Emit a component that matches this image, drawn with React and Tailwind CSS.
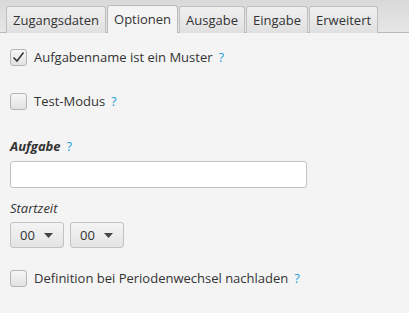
import { useState } from "react";

const tabs = ["Zugangsdaten", "Optionen", "Ausgabe", "Eingabe", "Erweitert"];

function Help() {
  return <span className="ml-[6px] text-[#1fa0d8]">?</span>;
}

function Check({ checked, label }) {
  return (
    <div className="flex items-center h-[18px]">
      <div className="w-[17px] h-[17px] rounded-[3px] border border-[#b5b5b5] bg-gradient-to-b from-[#f6f6f6] to-[#e2e2e2] flex items-center justify-center">
        {checked && (
          <svg width="13" height="12" viewBox="0 0 13 12">
            <path d="M1.5 6.5 L5 10 L11.5 1.5" fill="none" stroke="#333" strokeWidth="1.5" />
          </svg>
        )}
      </div>
      <span className="ml-[7px] text-[#333]">{label}</span>
      <Help />
    </div>
  );
}

function Select() {
  return (
    <div className="w-[54px] h-[26px] rounded-[3px] border border-[#c2c2c2] bg-gradient-to-b from-[#f4f4f4] to-[#e4e4e4] flex items-center pl-[9px] pr-[10px] justify-between">
      <span className="text-[#333]">00</span>
      <svg width="9" height="5" viewBox="0 0 9 5">
        <path d="M0 0 H9 L4.5 5 Z" fill="#444" />
      </svg>
    </div>
  );
}

export default function App() {
  const [active] = useState(1);
  return (
    <div className="w-[409px] h-[313px] bg-[#f4f4f4] text-[13px] leading-none" style={{ fontFamily: '"Open Sans", sans-serif' }}>
      <div className="h-[33px] bg-gradient-to-b from-[#d9d9d9] to-[#e6e6e6] border-b border-[#b9b9b9] flex items-end pl-[6px] gap-[1px]">
        {tabs.map((t, i) => (
          <div
            key={t}
            className={
              "h-[27px] px-[6px] flex items-center rounded-t-[3px] border border-b-0 -mb-px text-[#333] " +
              (i === active
                ? "bg-[#f4f4f4] border-[#b9b9b9] h-[28px]"
                : "bg-gradient-to-b from-[#f0f0f0] to-[#e0e0e0] border-[#c0c0c0]")
            }
          >
            {t}
          </div>
        ))}
      </div>
      <div className="pl-[10px] pt-[15px]">
        <Check checked label="Aufgabenname ist ein Muster" />
        <div className="mt-[26px]">
          <Check label="Test-Modus" />
        </div>
        <div className="mt-[30px] flex items-center">
          <span className="font-bold italic text-[#333]">Aufgabe</span>
          <Help />
        </div>
        <div className="mt-[8px] w-[297px] h-[27px] rounded-[3px] border border-[#c2c2c2] bg-white" />
        <div className="mt-[14px] italic text-[#333]">Startzeit</div>
        <div className="mt-[7px] flex gap-[6px]">
          <Select />
          <Select />
        </div>
        <div className="mt-[21px]">
          <Check label="Definition bei Periodenwechsel nachladen" />
        </div>
      </div>
    </div>
  );
}
